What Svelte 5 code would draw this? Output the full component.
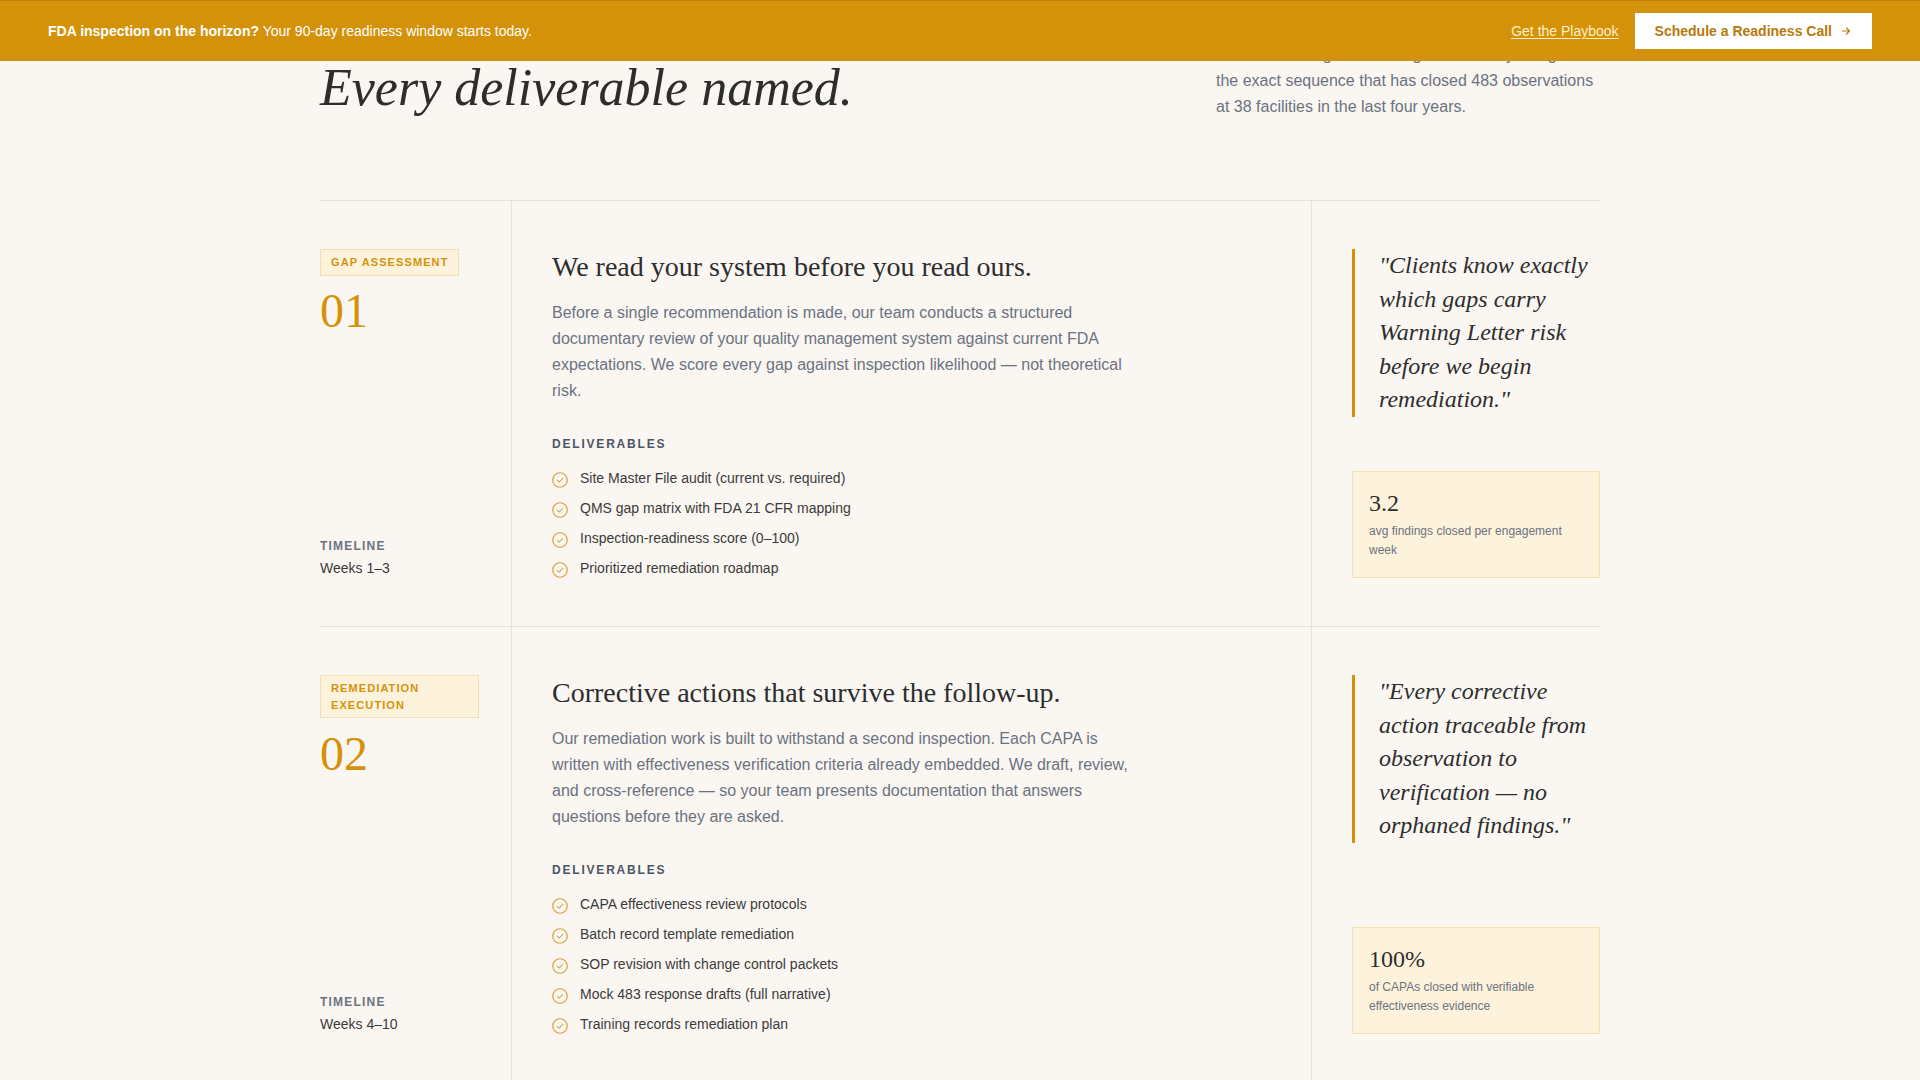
<script>
  const phases = [
    {
      tag: 'Gap Assessment', num: '01', time: 'Weeks 1–3',
      title: 'We read your system before you read ours.',
      body: 'Before a single recommendation is made, our team conducts a structured documentary review of your quality management system against current FDA expectations. We score every gap against inspection likelihood — not theoretical risk.',
      items: ['Site Master File audit (current vs. required)', 'QMS gap matrix with FDA 21 CFR mapping', 'Inspection-readiness score (0–100)', 'Prioritized remediation roadmap'],
      quote: '"Clients know exactly which gaps carry Warning Letter risk before we begin remediation."',
      stat: '3.2', label: 'avg findings closed per engagement week'
    },
    {
      tag: 'Remediation Execution', num: '02', time: 'Weeks 4–10',
      title: 'Corrective actions that survive the follow-up.',
      body: 'Our remediation work is built to withstand a second inspection. Each CAPA is written with effectiveness verification criteria already embedded. We draft, review, and cross-reference — so your team presents documentation that answers questions before they are asked.',
      items: ['CAPA effectiveness review protocols', 'Batch record template remediation', 'SOP revision with change control packets', 'Mock 483 response drafts (full narrative)', 'Training records remediation plan'],
      quote: '"Every corrective action traceable from observation to verification — no orphaned findings."',
      stat: '100%', label: 'of CAPAs closed with verifiable effectiveness evidence'
    }
  ];
</script>

<div class="viewport">
  <div class="banner">
    <p class="banner-text"><strong>FDA inspection on the horizon?</strong> Your 90-day readiness window starts today.</p>
    <div class="banner-actions">
      <a class="link" href="#playbook">Get the Playbook</a>
      <a class="cta" href="#call">Schedule a Readiness Call
        <svg width="12" height="12" viewBox="0 0 12 12" fill="none" stroke="currentColor" stroke-width="1.2" stroke-linecap="round" stroke-linejoin="round"><path d="M2.5 6h7M6.5 3l3 3-3 3"/></svg>
      </a>
    </div>
  </div>

  <main class="wrap">
    <header class="head">
      <h2>Every deliverable named.</h2>
      <p>Our work is long and thorough. We're only using<br>the exact sequence that has closed 483 observations at 38 facilities in the last four years.</p>
    </header>

    {#each phases as p}
      <section class="row">
        <div class="left">
          <div>
            <span class="tag">{p.tag}</span>
            <div class="num">{p.num}</div>
          </div>
          <div class="timeline">
            <div class="tl-label">Timeline</div>
            <div class="tl-value">{p.time}</div>
          </div>
        </div>
        <div class="center">
          <h3>{p.title}</h3>
          <p class="body">{p.body}</p>
          <div class="del-label">Deliverables</div>
          <ul>
            {#each p.items as item}
              <li>
                <svg width="16" height="16" viewBox="0 0 16 16" fill="none"><circle cx="8" cy="8" r="7.25" stroke="#d4a13a" stroke-width="1.2"/><path d="M5.2 8.2l2 1.9 3.6-3.8" stroke="#d4a95a" stroke-width="1.1" stroke-linecap="round" stroke-linejoin="round"/></svg>
                <span>{item}</span>
              </li>
            {/each}
          </ul>
        </div>
        <div class="right">
          <blockquote>{p.quote}</blockquote>
          <div class="stat">
            <div class="stat-num">{p.stat}</div>
            <div class="stat-label">{p.label}</div>
          </div>
        </div>
      </section>
    {/each}
  </main>
</div>

<style>
  :global(body) { margin: 0; background: #faf7f2; }
  .viewport { position: relative; height: 100vh; overflow: hidden; font-family: "Liberation Sans", Arial, sans-serif; color: #2d2d2d; background: #faf7f2; }
  .banner { position: absolute; top: 0; left: 0; right: 0; height: 61px; box-sizing: border-box; border-top: 1px solid #bd8208; background: #d4920a; display: flex; align-items: center; justify-content: space-between; padding: 0 48px; z-index: 2; }
  .banner-text { margin: 0; font-size: 14px; color: #fff; }
  .banner-text strong { font-weight: 700; }
  .banner-actions { display: flex; align-items: center; gap: 16px; }
  .link { font-size: 14px; color: #fdeec4; text-decoration: underline; text-underline-offset: 2px; }
  .cta { display: flex; align-items: center; gap: 8px; height: 36px; padding: 0 20px; background: #fff; color: #b8780a; font-size: 14px; font-weight: 700; text-decoration: none; }
  .wrap { width: 1280px; margin: 0 auto; }
  .head { display: flex; justify-content: space-between; align-items: flex-end; padding: 42px 0 80px; }
  h2 { margin: 0 0 1px; font-family: "Liberation Serif", serif; font-style: italic; font-weight: 400; font-size: 52px; line-height: 1.2; color: #2d2d2d; }
  .head p { margin: 0; width: 384px; font-size: 16px; line-height: 26px; color: #6b7280; }
  .row { display: grid; grid-template-columns: 192px 1fr 288px; border-top: 1px solid #e5e2dc; }
  .left { display: flex; flex-direction: column; justify-content: space-between; padding: 48px 32px 48px 0; border-right: 1px solid #e5e2dc; }
  .tag { display: inline-block; padding: 4px 10px; font-size: 11px; line-height: 16.5px; font-weight: 700; letter-spacing: 1.1px; text-transform: uppercase; color: #d4920a; background: #fdf3dc; border: 1px solid #f3dfb0; }
  .num { margin-top: 11.5px; font-family: "Liberation Serif", serif; font-size: 48px; line-height: 1; color: #d4920a; }
  .tl-label { font-size: 12px; font-weight: 700; letter-spacing: 1.2px; text-transform: uppercase; color: #6b7280; }
  .tl-value { margin-top: 5px; font-size: 14px; line-height: 20px; color: #3a3a3a; }
  .center { padding: 48px 40px; border-right: 1px solid #e5e2dc; }
  h3 { margin: 0 0 15px; font-family: "Liberation Serif", serif; font-weight: 400; font-size: 28px; line-height: 36px; color: #2d2d2d; }
  .body { margin: 0 0 33px; max-width: 580px; font-size: 16px; line-height: 26px; color: #6b7280; }
  .del-label { margin-bottom: 19px; font-size: 12px; font-weight: 700; letter-spacing: 1.8px; text-transform: uppercase; color: #4b5563; }
  ul { list-style: none; margin: 0; padding: 0; display: flex; flex-direction: column; gap: 12px; }
  li { display: flex; gap: 12px; font-size: 14px; line-height: 16px; color: #3a3a3a; }
  li svg { flex: none; margin-top: 2px; }
  .right { display: flex; flex-direction: column; justify-content: space-between; padding: 48px 0 48.5px 40px; }
  blockquote { margin: 0; padding-left: 24px; border-left: 3px solid #d4920a; font-family: "Liberation Serif", serif; font-style: italic; font-size: 24px; line-height: 33.6px; color: #2d2d2d; }
  .stat { padding: 16px 16px 16.5px; background: #fdf3dc; border: 1px solid #f3dfb0; }
  .stat-num { font-family: "Liberation Serif", serif; font-size: 24px; line-height: 30px; color: #2d2d2d; }
  .stat-label { margin-top: 4px; font-size: 12px; line-height: 19px; color: #6b7280; }
</style>
